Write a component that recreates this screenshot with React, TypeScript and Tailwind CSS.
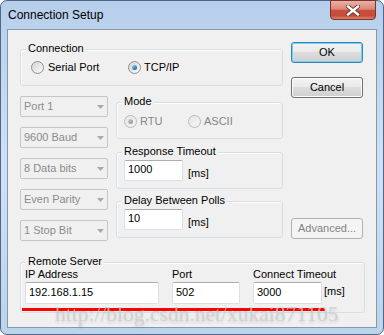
import React from "react";

function Radio({ checked, disabled }: { checked?: boolean; disabled?: boolean }) {
  return (
    <span
      className={`relative inline-block w-[13px] h-[13px] shrink-0 rounded-full border ${
        disabled
          ? "border-[#b9b9b9] bg-gradient-to-br from-[#e6e6e6] to-[#f7f7f7]"
          : "border-[#8e8f8f] bg-gradient-to-br from-[#d4d4d4] to-[#fbfbfb]"
      }`}
    >
      {checked && (
        <span
          className={`absolute left-[3px] top-[3px] w-[5px] h-[5px] rounded-full ${
            disabled
              ? "bg-gradient-to-br from-[#d2d2d2] to-[#8c8c8c]"
              : "bg-gradient-to-br from-[#8fdcff] to-[#0b4f8c]"
          }`}
        />
      )}
    </span>
  );
}

function Group({
  label,
  className,
  children,
}: {
  label: string;
  className: string;
  children?: React.ReactNode;
}) {
  return (
    <div className={`relative border border-[#d5dfe5] rounded-[3px] shadow-[inset_1px_1px_0_#ffffff] ${className}`}>
      <span className="absolute left-[5px] -top-[8px] px-[2px] bg-[#f0f0f0] leading-[13px]">{label}</span>
      {children}
    </div>
  );
}

function Combo({ text }: { text: string }) {
  return (
    <div className="relative h-[21px] w-[88px] border border-[#c5c5c5] rounded-[2px] bg-[#f0f0f0] flex items-center pl-[3px] text-[#8b8b8b]">
      {text}
      <svg className="absolute left-[76px] top-[8px]" width="7" height="4" viewBox="0 0 7 4">
        <path d="M0 0h7L3.5 4z" fill="#a9a9a9" />
      </svg>
    </div>
  );
}

function Input({ value, className }: { value: string; className: string }) {
  return (
    <div className={`bg-white border border-[#dcdfe6] border-t-[#abadb3] rounded-[2px] pl-[3px] ${className}`}>
      {value}
    </div>
  );
}

function Button({ text, def, disabled, className }: { text: string; def?: boolean; disabled?: boolean; className?: string }) {
  const look = disabled
    ? "border-[#adb2b5] bg-[#f4f4f4] text-[#838383]"
    : def
    ? "border-[#3c7fb1] bg-[linear-gradient(to_bottom,#f2f2f2_0%,#ebebeb_45%,#dddddd_50%,#cfcfcf_100%)] shadow-[inset_0_0_0_1px_#6fd6fb] text-black"
    : "border-[#707070] bg-[linear-gradient(to_bottom,#f2f2f2_0%,#ebebeb_45%,#dddddd_50%,#cfcfcf_100%)] shadow-[inset_0_0_0_1px_#fcfcfc] text-black";
  return (
    <div className={`h-[21px] w-[72px] rounded-[3px] border flex items-center justify-center ${look} ${className ?? ""}`}>
      {text}
    </div>
  );
}

export default function App() {
  return (
    <div className="w-[384px] h-[335px] overflow-hidden bg-white font-['Liberation_Sans',Arial,sans-serif]">
      <div className="relative w-[384px] h-[335px] rounded-[7px] border border-[#51678a] bg-gradient-to-b from-[#b7cfeb] via-[#cfe1f5] to-[#bcd3ec] px-[6px]">
        {/* Title bar */}
        <div className="h-[28px] flex items-start justify-between">
          <span className="pt-[7px] pl-[1px] text-[12px] leading-[14px] text-black">Connection Setup</span>
          <div className="mr-[1px] -mt-[1px] w-[46px] h-[20px] rounded-b-[4px] border border-[#7e3328] bg-[linear-gradient(to_bottom,#eab0a6_0%,#dc8778_45%,#c9503d_52%,#c54a37_80%,#d9826c_100%)] flex items-center justify-center">
            <svg width="14" height="11" viewBox="0 0 14 11">
              <path d="M2 1.5L12 9.5M12 1.5L2 9.5" stroke="#5a2a24" strokeWidth="4" strokeLinecap="square" />
              <path d="M2 1.5L12 9.5M12 1.5L2 9.5" stroke="#ffffff" strokeWidth="2.4" strokeLinecap="square" />
            </svg>
          </div>
        </div>

        {/* Client area */}
        <div className="relative w-[370px] h-[299px] border border-[#8797ad] bg-[#f0f0f0] pl-[12px] pt-[12px] text-[11px] leading-[13px] text-black">
          <div className="flex">
            <div className="w-[263px] flex flex-col">
              <Group label="Connection" className="mt-[7px] h-[37px]">
                <div className="flex items-center pt-[11px] pl-[10px]">
                  <div className="w-[97px] flex items-center gap-[4px]">
                    <Radio />
                    <span>Serial Port</span>
                  </div>
                  <div className="flex items-center gap-[3px]">
                    <Radio checked />
                    <span>TCP/IP</span>
                  </div>
                </div>
              </Group>

              <div className="flex mt-[10px]">
                <div className="flex flex-col gap-[10px]">
                  <Combo text="Port 1" />
                  <Combo text="9600 Baud" />
                  <Combo text="8 Data bits" />
                  <Combo text="Even Parity" />
                  <Combo text="1 Stop Bit" />
                </div>
                <div className="ml-[8px] w-[167px] flex flex-col">
                  <Group label="Mode" className="mt-[6px] h-[37px]">
                    <div className="flex items-center pt-[12px] pl-[7px] text-[#858585]">
                      <div className="w-[64px] flex items-center gap-[3px]">
                        <Radio checked disabled />
                        <span>RTU</span>
                      </div>
                      <div className="flex items-center gap-[3px]">
                        <Radio disabled />
                        <span>ASCII</span>
                      </div>
                    </div>
                  </Group>
                  <Group label="Response Timeout" className="mt-[13px] h-[37px]">
                    <div className="flex items-start pt-[7px] pl-[7px]">
                      <Input value="1000" className="w-[59px] h-[21px] pt-[2px]" />
                      <span className="ml-[5px] mt-[7px]">[ms]</span>
                    </div>
                  </Group>
                  <Group label="Delay Between Polls" className="mt-[12px] h-[37px]">
                    <div className="flex items-start pt-[7px] pl-[7px]">
                      <Input value="10" className="w-[59px] h-[21px] pt-[2px]" />
                      <span className="ml-[5px] mt-[7px]">[ms]</span>
                    </div>
                  </Group>
                </div>
              </div>
            </div>

            <div className="ml-[8px] w-[72px] flex flex-col">
              <Button text="OK" def />
              <Button text="Cancel" className="mt-[14px]" />
              <Button text="Advanced..." disabled className="mt-[120px]" />
            </div>
          </div>

          <Group label="Remote Server" className="mt-[21px] w-[345px] h-[51px]">
            <div className="flex pl-[4px] pt-[5px]">
              <div className="w-[134px] flex flex-col">
                <span>IP Address</span>
                <Input value="192.168.1.15" className="mt-[1px] h-[22px] pt-[3px]" />
              </div>
              <div className="ml-[13px] w-[68px] flex flex-col">
                <span>Port</span>
                <Input value="502" className="mt-[1px] h-[22px] pt-[3px]" />
              </div>
              <div className="ml-[13px] flex flex-col">
                <span>Connect Timeout</span>
                <div className="mt-[1px] flex items-start">
                  <Input value="3000" className="w-[69px] h-[22px] pt-[3px]" />
                  <span className="ml-[2px] mt-[3px]">[ms]</span>
                </div>
              </div>
            </div>
          </Group>

          {/* red annotation underline */}
          <div className="absolute left-[14px] top-[278px] w-[303px] h-[3px] bg-[#ff0000]" />
        </div>

        {/* watermark */}
        <span className="absolute left-[54px] top-[302px] font-['Liberation_Serif',serif] text-[21.5px] leading-[22px] text-[#cdcdcd]/80 [text-shadow:0_2px_3px_rgba(0,0,0,0.12)] whitespace-nowrap">
          http://blog.csdn.net/xukai871105
        </span>
      </div>
    </div>
  );
}
